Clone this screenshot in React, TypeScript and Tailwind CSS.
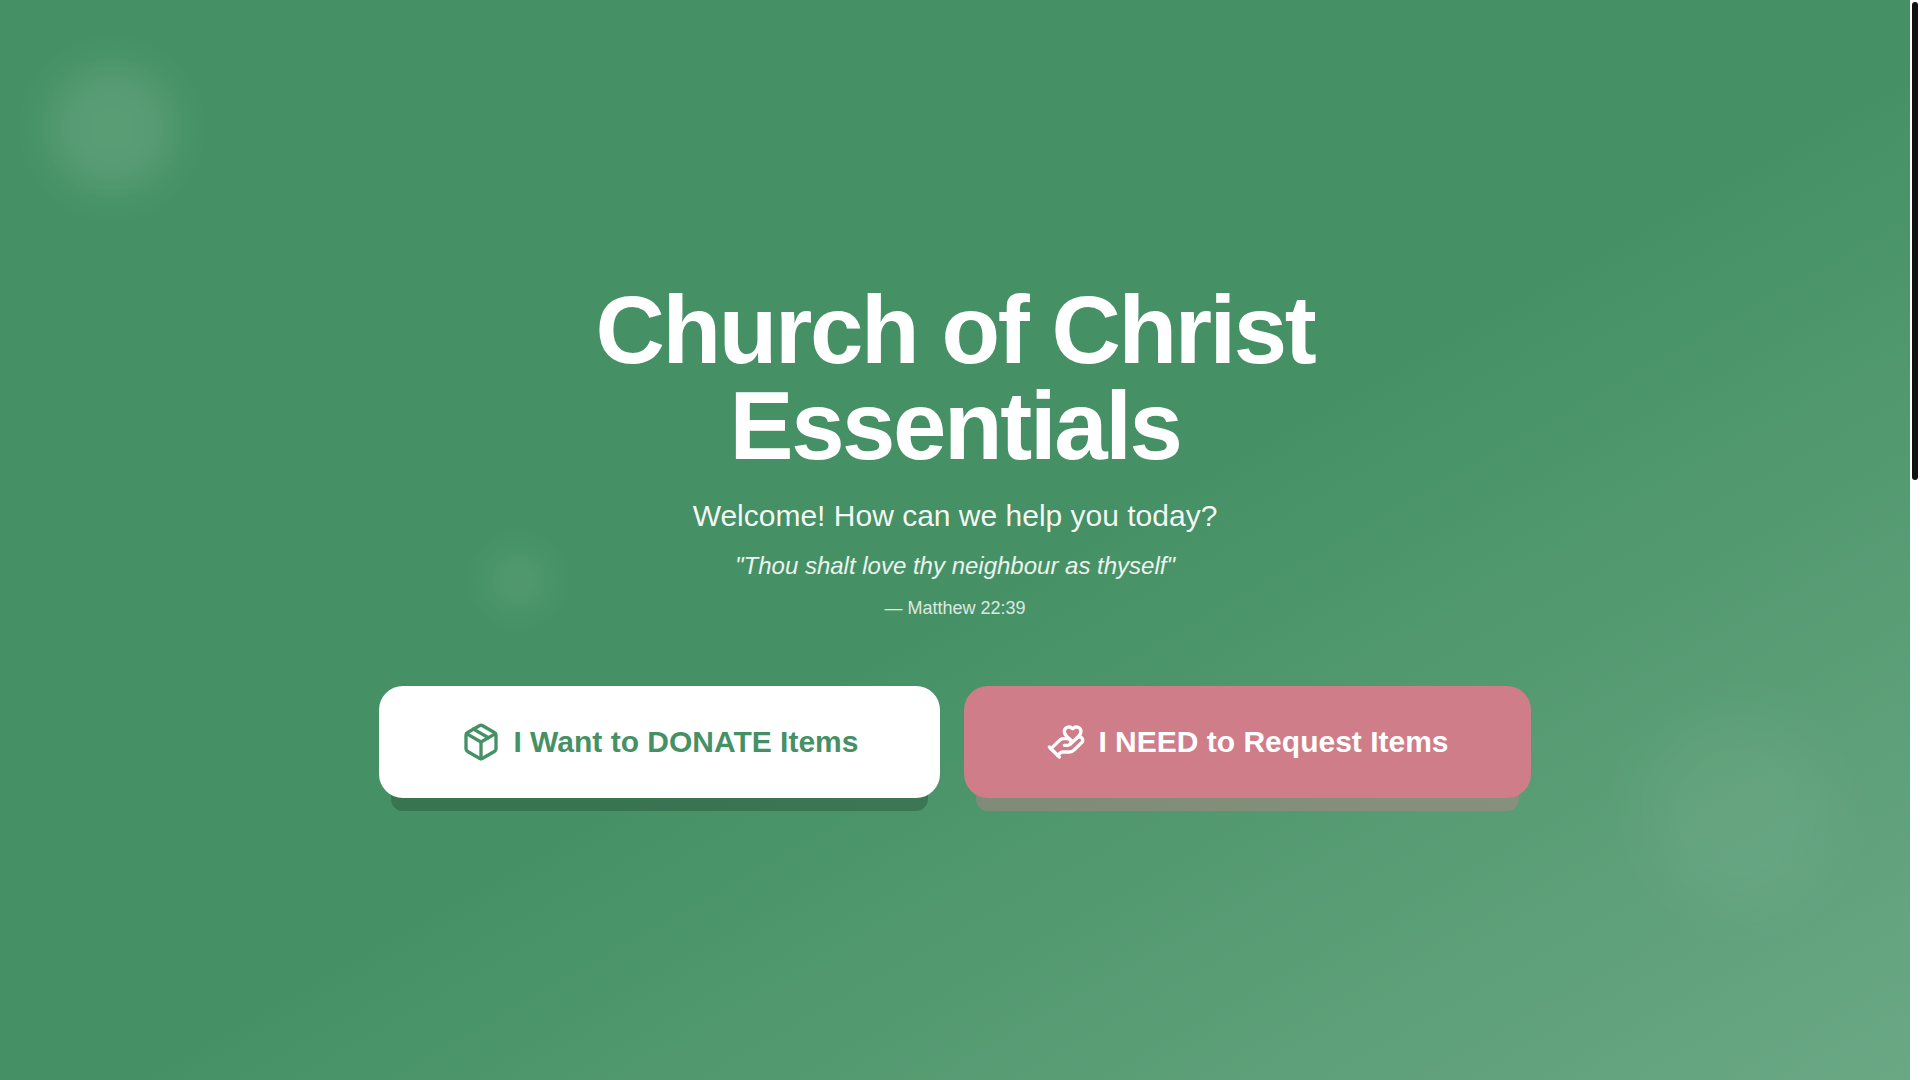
import { HandHeart, Package } from 'lucide-react';

const actions = [
    {
        id: 'donate',
        label: 'I Want to DONATE Items',
        icon: Package,
        style: 'bg-white text-[#459165] shadow-[0_25px_0_-12px_rgba(0,0,0,0.2)]',
    },
    {
        id: 'request',
        label: 'I NEED to Request Items',
        icon: HandHeart,
        style: 'bg-[#ce7d89] text-white shadow-[0_25px_0_-12px_rgba(206,125,137,0.4)]',
    },
];

const Hero = () => {
    return (
        <section className="relative flex min-h-screen grow items-center justify-center overflow-hidden bg-linear-to-br from-[#459165] via-[#459165] via-53% to-[#6aa884]">
            {/* Soft background circles */}
            <div className="absolute top-16 left-12 size-32 rounded-full bg-white/11 blur-[20px]" />
            <div className="absolute top-1/2 left-1/4 mt-2 ml-2 size-16 rounded-full bg-white/7 blur-lg" />
            <div className="absolute right-19 bottom-43 size-48 rounded-full bg-white/5 blur-[32px]" />

            <div className="relative flex flex-col items-center text-center text-white">
                <h1 className="mb-6 max-w-4xl text-8xl font-bold tracking-tight">Church of Christ Essentials</h1>
                <p className="mb-4 text-3xl text-white/95">Welcome! How can we help you today?</p>
                <p className="mb-3 text-2xl text-white/90 italic">"Thou shalt love thy neighbour as thyself"</p>
                <p className="mb-16 text-lg text-white/80">— Matthew 22:39</p>

                <div className="flex flex-wrap justify-center gap-6">
                    {actions.map(({ id, label, icon: Icon, style }) => (
                        <button
                            key={id}
                            type="button"
                            className={`flex items-center gap-3 rounded-3xl px-[82px] py-9 text-3xl font-bold ${style}`}
                        >
                            <Icon className="size-10" />
                            {label}
                        </button>
                    ))}
                </div>
            </div>
        </section>
    );
};

export default function App() {
    return (
        <div className="flex h-screen overflow-hidden bg-white font-['Liberation_Sans',Arial,sans-serif]">
            <Hero />
            {/* Scroll track */}
            <div className="w-2.5 shrink-0 bg-white p-0.5 pr-0">
                <div className="h-[478px] w-1.5 rounded-full bg-[#111111]" />
            </div>
        </div>
    );
}
